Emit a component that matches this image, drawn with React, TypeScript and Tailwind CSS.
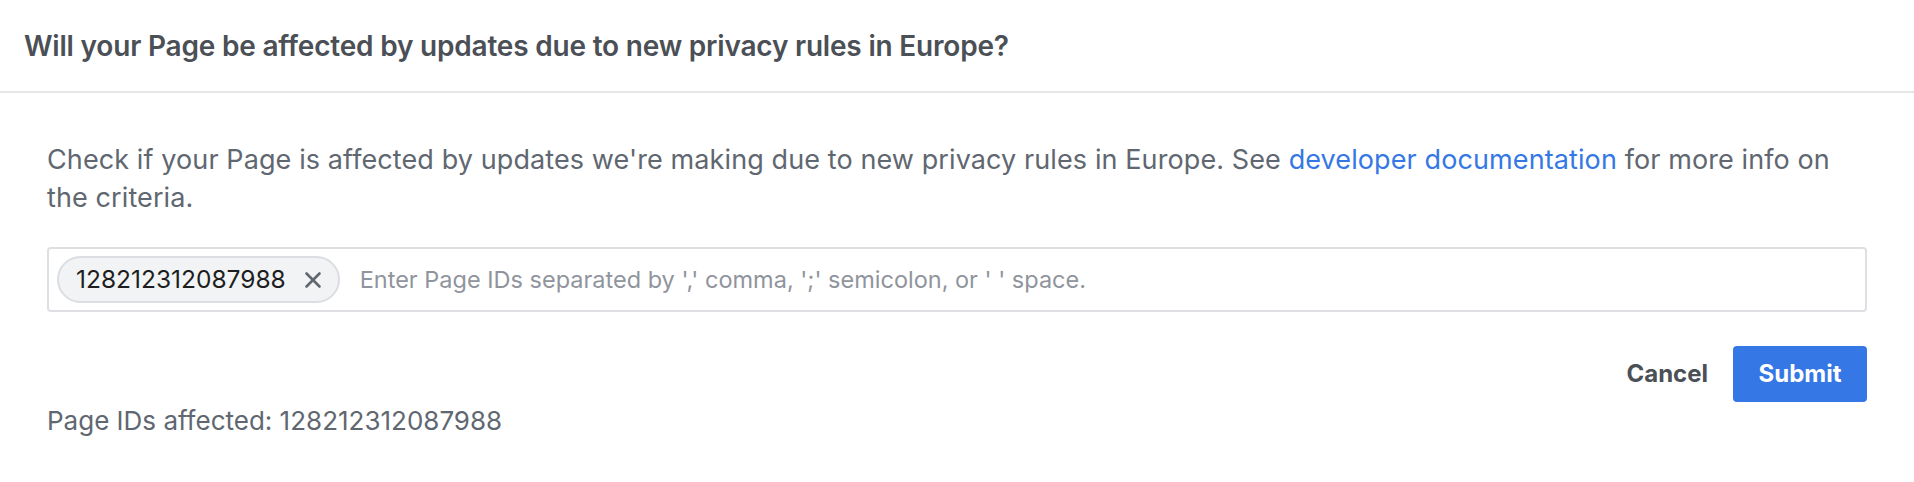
import { X } from "lucide-react";

export default function App() {
  return (
    <div
      className="min-h-screen bg-white"
      style={{ fontFamily: "Inter, 'Noto Sans', sans-serif" }}
    >
      <div className="h-[93px] flex items-center px-6 border-b-2 border-[#e5e5e5]">
        <h1 className="text-[28px] font-semibold text-[#4b4f56] tracking-[-0.2px]">
          Will your Page be affected by updates due to new privacy rules in Europe?
        </h1>
      </div>

      <div className="px-[47px] pt-[48px]">
        <p className="max-w-[1790px] text-[27px] leading-[38px] tracking-[0.1px] text-[#606770]">
          Check if your Page is affected by updates we're making due to new
          privacy rules in Europe. See{" "}
          <a href="#" className="text-[#3578e5]">
            developer documentation
          </a>{" "}
          for more info on the criteria.
        </p>

        <div className="mt-[30px] h-[65px] border-2 border-[#dddfe2] rounded-[4px] flex items-center px-[8px] gap-[20px]">
          <div className="h-[47px] flex items-center gap-[14px] pl-[17px] pr-[12px] rounded-full bg-[#f2f3f5] border-2 border-[#dadde1]">
            <span className="text-[24.5px] text-[#1c1e21]">128212312087988</span>
            <X className="w-[26px] h-[26px] text-[#606770]" strokeWidth={2.4} />
          </div>
          <span className="text-[23.5px] text-[#90949c]">
            Enter Page IDs separated by ',' comma, ';' semicolon, or ' ' space.
          </span>
        </div>

        <div className="mt-[34px] flex justify-end items-center gap-[25px]">
          <button className="text-[24px] font-bold text-[#4b4f56]">Cancel</button>
          <button className="h-[56px] w-[134px] rounded-[4px] bg-[#3578e5] text-white text-[24px] font-bold">
            Submit
          </button>
        </div>

        <p className="text-[26px] leading-[30px] text-[#606770] mt-[4px]">
          Page IDs affected: 128212312087988
        </p>
      </div>
    </div>
  );
}
